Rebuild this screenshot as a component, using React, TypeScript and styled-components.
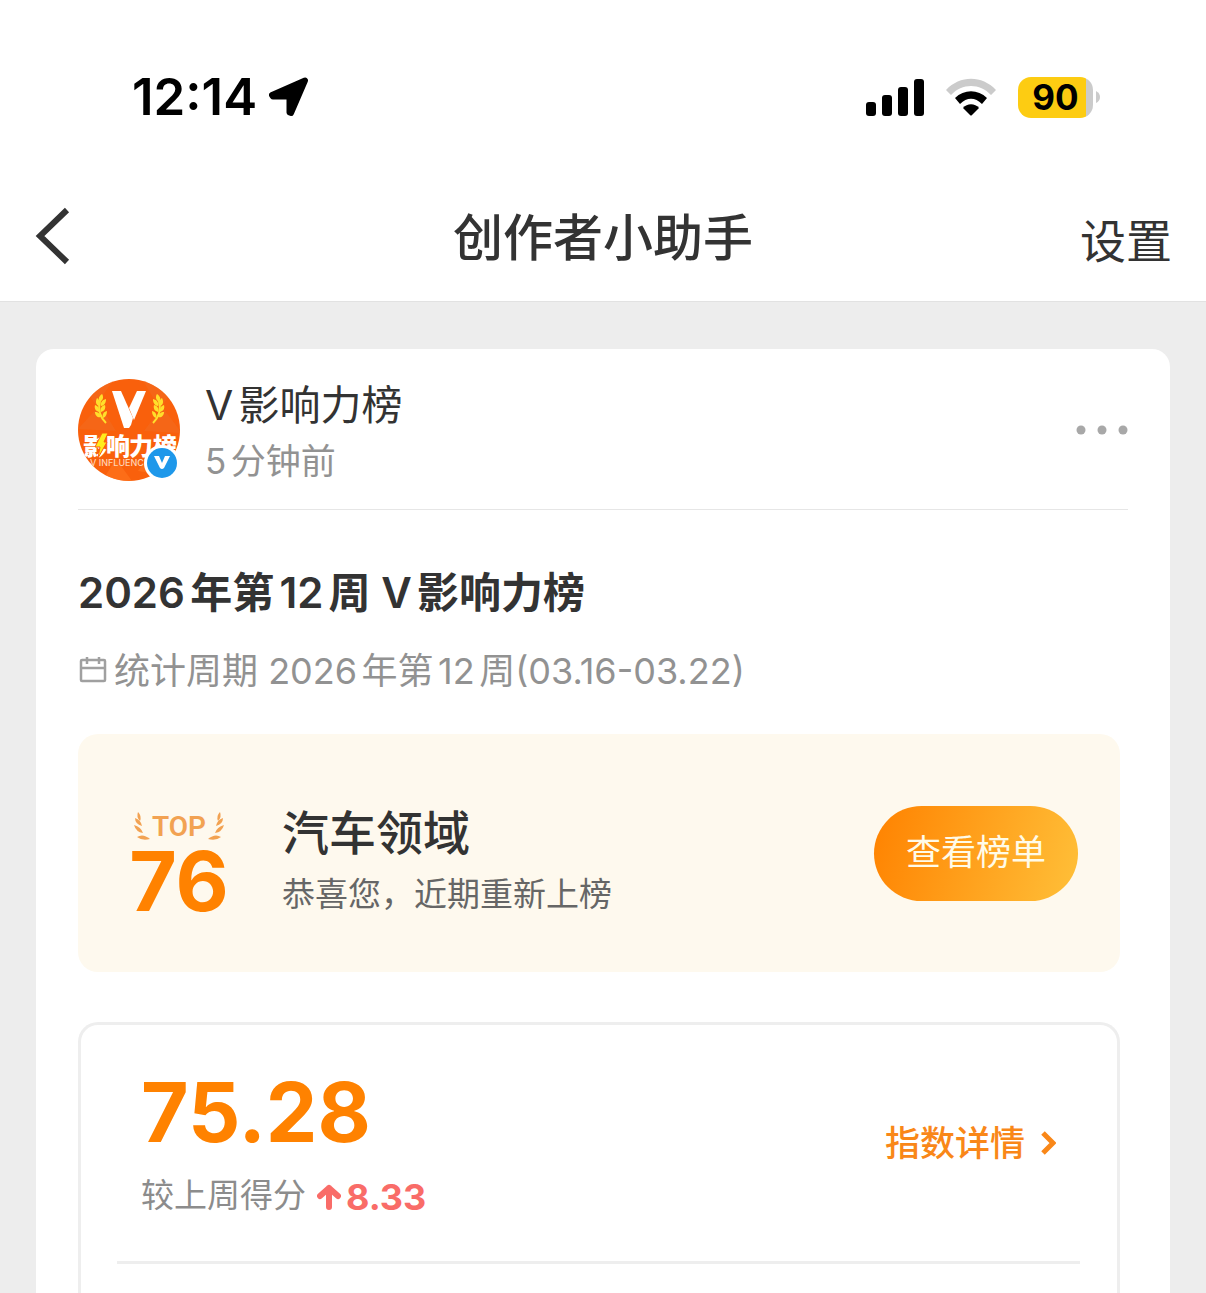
import React from 'react';
import styled, { createGlobalStyle } from 'styled-components';

const GlobalStyle = createGlobalStyle`
  *, *::before, *::after { box-sizing: border-box; }
  body {
    margin: 0;
    background: #ededed;
    color: #333;
    font-family: Inter, "Noto Sans CJK SC", sans-serif;
    text-autospace: normal;
  }
  h1, h2, h3, p { margin: 0; font-weight: inherit; }
  button { border: 0; padding: 0; background: none; color: inherit; font: inherit; cursor: pointer; }
  a { color: inherit; text-decoration: none; }
  svg { display: block; flex: none; }
`;

const Page = styled.div`
  display: flex;
  flex-direction: column;
  height: 100vh;
  overflow: hidden;
`;

const Top = styled.header`
  background: #fff;
  border-bottom: 1px solid #e2e2e2;
`;

const StatusBar = styled.div`
  display: flex;
  align-items: center;
  justify-content: space-between;
  padding: 67px 106px 48px 132px;
  color: #000;
`;

const StatusGroup = styled.div<{ $gap: number }>`
  display: flex;
  align-items: center;
  gap: ${(p) => p.$gap}px;
`;

const Clock = styled.time`
  font-size: 51px;
  line-height: 60px;
  font-weight: 600;
`;

const BatteryWrap = styled.div`
  display: flex;
  align-items: center;
  gap: 3px;
`;

const Battery = styled.div`
  width: 75px;
  height: 41px;
  border-radius: 13px;
  background: linear-gradient(90deg, #fdcc12 68px, #cbcbcb 68px);
  font-size: 35px;
  line-height: 41px;
  font-weight: 700;
  text-align: center;
`;

const NavBar = styled.nav`
  display: grid;
  grid-template-columns: 1fr auto 1fr;
  align-items: center;
  height: 126px;
  padding: 0 34px;
`;

const Back = styled.button`
  justify-self: start;
  padding-bottom: 4px;
`;

const NavTitle = styled.h1`
  font-size: 50px;
  line-height: 60px;
  font-weight: 500;
`;

const Settings = styled.button`
  justify-self: end;
  padding-top: 6px;
  font-size: 46px;
  line-height: 60px;
`;

const Body = styled.main`
  flex: 1;
  display: flex;
  padding: 47px 36px 0;
  min-height: 0;
`;

const Card = styled.article`
  flex: 1;
  display: flex;
  flex-direction: column;
  padding: 0 42px;
  border-radius: 18px 18px 0 0;
  background: #fff;
`;

const Author = styled.div`
  display: flex;
  align-items: center;
  height: 161px;
  padding-top: 2px;
  border-bottom: 1px solid #e6e6e6;
`;

const AuthorText = styled.div`
  flex: 1;
  margin-left: 25px;
  padding-top: 6px;
`;

const AuthorName = styled.h2`
  font-size: 41px;
  line-height: 56px;
`;

const PostTime = styled.p`
  font-size: 35px;
  line-height: 56px;
  color: #929292;
`;

const Content = styled.section`
  flex: 1;
  display: flex;
  flex-direction: column;
  padding: 53px 8px 0 0;
`;

const Headline = styled.h2`
  font-size: 42px;
  line-height: 60px;
  font-weight: 600;
`;

const Period = styled.p`
  display: flex;
  align-items: center;
  gap: 7px;
  margin-top: 20px;
  font-size: 36px;
  line-height: 56px;
  color: #929292;
`;

const RankBox = styled.section`
  display: flex;
  align-items: center;
  height: 238px;
  margin-top: 35px;
  padding: 0 42px 0 50px;
  border-radius: 20px;
  background: #fef9ee;
`;

const Rank = styled.div`
  display: flex;
  flex-direction: column;
  align-items: center;
  width: 102px;
  padding-top: 28px;
`;

const TopLabel = styled.div`
  display: flex;
  align-items: center;
  gap: 2px;
  font-family: Roboto, sans-serif;
  font-size: 28px;
  line-height: 29px;
  font-weight: 600;
  color: #f2a252;
`;

const BigNumber = styled.strong`
  font-size: 82px;
  line-height: 82px;
  font-weight: 700;
  color: #ff8200;
`;

const RankText = styled.div`
  flex: 1;
  margin-left: 52px;
  padding-top: 22px;
`;

const Field = styled.h3`
  font-size: 47px;
  line-height: 60px;
  font-weight: 500;
`;

const Congrats = styled.p`
  font-size: 33px;
  line-height: 62px;
  color: #666;
`;

const ViewList = styled.button`
  width: 204px;
  height: 95px;
  padding-bottom: 8px;
  border-radius: 48px;
  background: linear-gradient(105deg, #ff8200, #ffc039);
  color: #fffbe8;
  font-size: 35px;
`;

const ScoreBox = styled.section`
  flex: 1;
  margin-top: 50px;
  padding: 0 37px 0 36px;
  border: 3px solid #eee;
  border-bottom: 0;
  border-radius: 20px 20px 0 0;
`;

const ScoreRow = styled.div`
  display: flex;
  align-items: center;
  justify-content: space-between;
  height: 239px;
  padding: 0 24px;
  border-bottom: 3px solid #eee;
`;

const Score = styled.div`
  display: flex;
  flex-direction: column;
  padding-top: 10px;
`;

const Change = styled.p`
  display: flex;
  align-items: center;
  margin-top: 11px;
  font-size: 33px;
  line-height: 56px;
  color: #8c8c8c;
`;

const Delta = styled.strong`
  display: flex;
  align-items: center;
  gap: 5px;
  margin-left: 11px;
  padding-top: 4px;
  font-size: 36px;
  font-weight: 700;
  color: #f96c68;
`;

const Detail = styled.a`
  display: flex;
  align-items: center;
  gap: 16px;
  font-size: 35px;
  line-height: 56px;
  font-weight: 500;
  color: #f98718;
`;

const LocationArrow = () => (
  <svg width="40" height="40" viewBox="0 0 40 40" aria-hidden="true">
    <path d="M3 18 36 3.500 22 36 20.500 35.500V19.500H4Z" fill="#000" stroke="#000" strokeWidth="6" strokeLinejoin="round" />
  </svg>
);

const Signal = () => (
  <svg width="58" height="38" viewBox="0 0 58 38" aria-hidden="true">
    <rect x="0" y="24" width="10" height="14" rx="3" />
    <rect x="16" y="17" width="10" height="21" rx="3" />
    <rect x="32" y="9" width="10" height="29" rx="3" />
    <rect x="48" y="1" width="10" height="37" rx="3" />
  </svg>
);

const Wifi = () => (
  <svg width="50" height="38" viewBox="0 0 50 38" aria-hidden="true">
    <path d="M0 12C14-3 36-3 50 12L45 17C34 5 16 5 5 17Z" fill="#cbcbcb" />
    <path d="M9 20C18 11 32 11 41 20L36 26C29 19 21 19 14 26Z" />
    <path d="M17 30C21 25 29 25 33 30L26 37Q25 38 24 37Z" />
  </svg>
);

const BackIcon = () => (
  <svg width="36" height="58" viewBox="0 0 36 58" fill="none" aria-hidden="true">
    <path d="M33 3 6 29 33 55" stroke="#333" strokeWidth="6" />
  </svg>
);

const leaves = [
  'M24 15c-4 3-4 6-2 8 3-2 4-5 2-8Z',
  'M19 19c-2 4-1 7 2 8 1-3 1-6-2-8Z',
  'M28 20c-4 1-6 4-5 7 3 0 5-3 5-7Z',
  'M17 26c-1 4 1 6 4 7 1-3-1-6-4-7Z',
  'M27 26c-4 1-5 4-4 7 3-1 5-3 4-7Z',
  'M17 33c0 4 3 6 6 5 0-3-3-5-6-5Z',
  'M29 32c-4 1-5 4-4 7 3-1 4-4 4-7Z',
];

const Laurel = () => (
  <g>
    {leaves.map((d) => (
      <path key={d} d={d} fill="#ffdf2b" />
    ))}
    <path d="M22 22c-2 8 0 16 6 22" stroke="#ffdf2b" strokeWidth="2" fill="none" />
  </g>
);

const Avatar = () => (
  <svg width="102" height="102" viewBox="0 0 102 102" overflow="visible" role="img" aria-label="V影响力榜">
    <defs>
      <clipPath id="avatar-round">
        <circle cx="51" cy="51" r="51" />
      </clipPath>
    </defs>
    <g clipPath="url(#avatar-round)">
      <rect width="102" height="102" fill="#f9600c" />
      <path d="M0 0h36L18 26ZM64 0h38L82 30ZM0 50l22-24 16 26ZM66 52l18-24 20 26Z" fill="#f26a20" opacity=".6" />
      <path d="M24 102l14-22 16 22ZM60 92l12-18 14 22Z" fill="#ff761f" opacity=".6" />
      <Laurel />
      <g transform="matrix(-1 0 0 1 103 0)">
        <Laurel />
      </g>
      <path d="M34 12H43L55 39 53 46 51 49H46Z" fill="#fff" />
      <path d="M59 12H68L56 41 51 29Z" fill="#fff" />
      <g fill="#fff" fontFamily="Noto Sans CJK SC, sans-serif" fontWeight="900" fontSize="24">
        <text x="5" y="76">影</text>
        <text x="28" y="76">响</text>
        <text x="51" y="76">力</text>
        <text x="75" y="76">榜</text>
      </g>
      <path d="M24 54H30L26 63H29L20 79 22 68H17Z" fill="#ffec1c" stroke="#f9600c" strokeWidth="1" />
      <text x="12" y="87" fill="#ffd3b5" fontFamily="Inter, sans-serif" fontWeight="500" fontSize="9">
        V INFLUENCE
      </text>
    </g>
    <circle cx="84" cy="84" r="18" fill="#fff" />
    <circle cx="84" cy="84" r="15" fill="#1e98ea" />
    <path d="M76 77H81L84 84 87 77H92L86 89Q84 91 82 89Z" fill="#fff" />
  </svg>
);

const MoreIcon = () => (
  <svg width="52" height="10" viewBox="0 0 52 10" fill="#a8a8a8" aria-hidden="true">
    <circle cx="5" cy="5" r="4.5" />
    <circle cx="26" cy="5" r="4.5" />
    <circle cx="47" cy="5" r="4.5" />
  </svg>
);

const CalendarIcon = () => (
  <svg width="29" height="30" viewBox="0 0 29 30" fill="none" stroke="#a0a0a0" strokeWidth="2.5" aria-hidden="true">
    <rect x="3" y="4" width="24" height="21" rx="1" />
    <path d="M3 12H27M9 1V8M21 1V8" />
  </svg>
);

const Branch = ({ flip }: { flip?: boolean }) => (
  <svg width="16" height="28" viewBox="0 0 16 28" fill="#f2a252" aria-hidden="true">
    <g transform={flip ? 'matrix(-1 0 0 1 16 0)' : undefined}>
      <path d="M4 0Q8 4 6 9Q2 5 4 0Z" />
      <path d="M1 6Q7 8 8 14Q1 12 1 6Z" />
      <path d="M0 13Q7 15 9 21Q2 20 0 13Z" />
      <path d="M3 25Q9 21 16 27Q8 29 3 25Z" />
    </g>
  </svg>
);

const UpArrow = () => (
  <svg width="24" height="26" viewBox="0 0 24 26" fill="none" stroke="#f96c68" strokeWidth="6" strokeLinecap="round" strokeLinejoin="round" aria-hidden="true">
    <path d="M12 23V4M3 12 12 4 21 12" />
  </svg>
);

const NextIcon = () => (
  <svg width="15" height="24" viewBox="0 0 15 24" fill="none" stroke="#f98718" strokeWidth="5" aria-hidden="true">
    <path d="M2 2 12 12 2 22" />
  </svg>
);

export default function App() {
  return (
    <Page>
      <GlobalStyle />
      <Top>
        <StatusBar>
          <StatusGroup $gap={12}>
            <Clock>12:14</Clock>
            <LocationArrow />
          </StatusGroup>
          <StatusGroup $gap={22}>
            <Signal />
            <Wifi />
            <BatteryWrap>
              <Battery>90</Battery>
              <svg width="4" height="12" viewBox="0 0 4 12" aria-hidden="true">
                <path d="M0 0Q4 2 4 6T0 12Z" fill="#cbcbcb" />
              </svg>
            </BatteryWrap>
          </StatusGroup>
        </StatusBar>
        <NavBar>
          <Back type="button" aria-label="返回">
            <BackIcon />
          </Back>
          <NavTitle>创作者小助手</NavTitle>
          <Settings type="button">设置</Settings>
        </NavBar>
      </Top>
      <Body>
        <Card>
          <Author>
            <Avatar />
            <AuthorText>
              <AuthorName>V影响力榜</AuthorName>
              <PostTime>5分钟前</PostTime>
            </AuthorText>
            <button type="button" aria-label="更多">
              <MoreIcon />
            </button>
          </Author>
          <Content>
            <Headline>2026年第12周 V影响力榜</Headline>
            <Period>
              <CalendarIcon />
              <span>统计周期 2026年第12周(03.16-03.22)</span>
            </Period>
            <RankBox>
              <Rank>
                <TopLabel>
                  <Branch />
                  TOP
                  <Branch flip />
                </TopLabel>
                <BigNumber>76</BigNumber>
              </Rank>
              <RankText>
                <Field>汽车领域</Field>
                <Congrats>恭喜您，近期重新上榜</Congrats>
              </RankText>
              <ViewList type="button">查看榜单</ViewList>
            </RankBox>
            <ScoreBox>
              <ScoreRow>
                <Score>
                  <BigNumber>75.28</BigNumber>
                  <Change>
                    较上周得分
                    <Delta>
                      <UpArrow />
                      8.33
                    </Delta>
                  </Change>
                </Score>
                <Detail href="#detail">
                  指数详情
                  <NextIcon />
                </Detail>
              </ScoreRow>
            </ScoreBox>
          </Content>
        </Card>
      </Body>
    </Page>
  );
}
